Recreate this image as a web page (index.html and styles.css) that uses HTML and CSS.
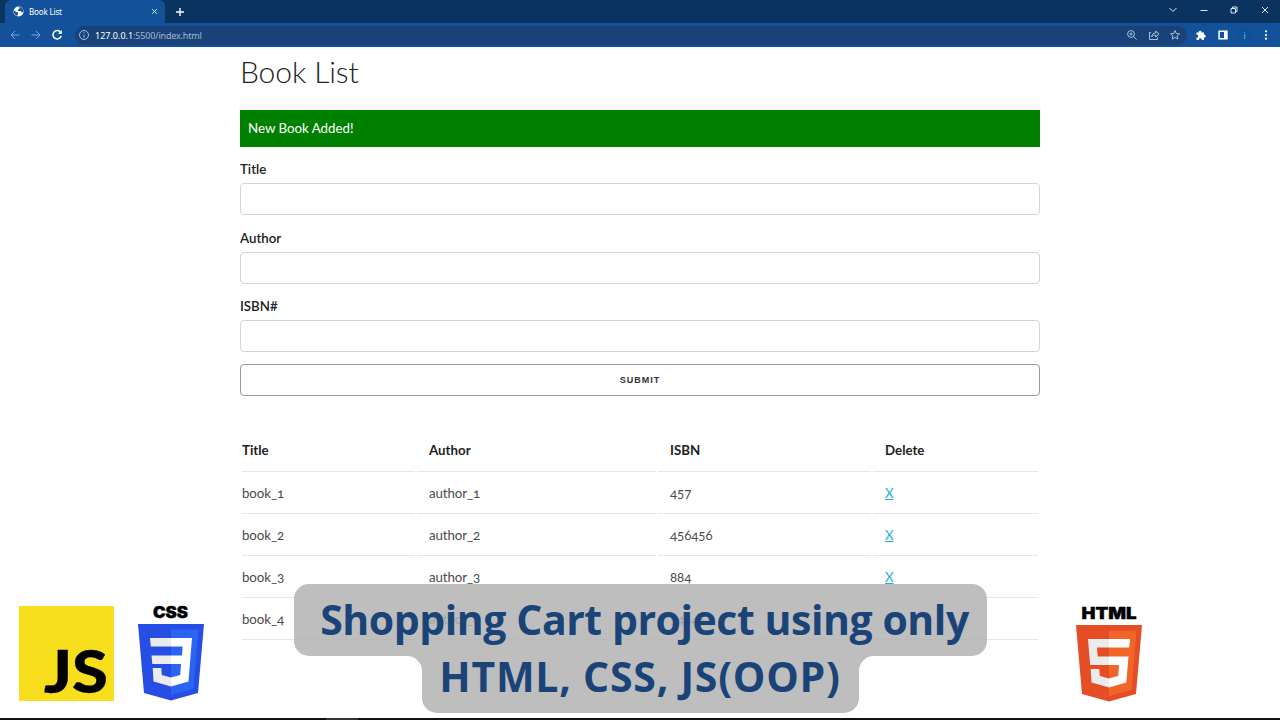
FILE: index.html
```
<!DOCTYPE html>
<html lang="en">

<head>
    <meta charset="UTF-8">
    <meta name="viewport" content="width=device-width, initial-scale=1.0">
    <title>Book List</title>
    <link rel="stylesheet" href="styles.css">
</head>

<body>
    <div class="browser">
        <div class="tab-bar">
            <div class="tab">
                <svg class="favicon" viewBox="0 0 24 24">
                    <circle cx="12" cy="12" r="11" fill="#fff" />
                    <path d="M2 9l5 4 4 1v3l-2 5-4-3-3-5zM12 2l3 3-4 3v3h6l2 3 3-1V8l-4-5z" fill="#14509a" />
                </svg>
                <span class="tab-title">Book List</span>
                <svg class="tab-close" viewBox="0 0 8 8"><path d="M1.4 1.4l5.2 5.2M6.6 1.4L1.4 6.6" /></svg>
            </div>
            <svg class="new-tab" viewBox="0 0 10 10"><path d="M5 1v8M1 5h8" /></svg>
            <div class="window-controls">
                <svg viewBox="0 0 12 12"><path d="M2.5 4L6 7.5 9.5 4" /></svg>
                <svg viewBox="0 0 12 12"><path d="M2.5 6.5h7" /></svg>
                <svg viewBox="0 0 12 12"><path d="M3 4.5h4.5V9H3zM4.5 4.5V3H9v4.5H7.5" /></svg>
                <svg viewBox="0 0 12 12"><path d="M3 3l6 6M9 3L3 9" /></svg>
            </div>
        </div>
        <div class="toolbar">
            <div class="nav">
                <svg class="dim" viewBox="0 0 12 12"><path d="M10.5 6H2M6 2L2 6l4 4" /></svg>
                <svg class="dim" viewBox="0 0 12 12"><path d="M1.5 6H10M6 2l4 4-4 4" /></svg>
                <svg class="reload" viewBox="0 0 12 12"><path d="M9.6 3.3A4.2 4.2 0 1 0 10.2 7" /><path d="M10.8 1v4H6.8z" class="solid" /></svg>
            </div>
            <div class="address">
                <svg class="info" viewBox="0 0 12 12"><circle cx="6" cy="6" r="4.5" /><path d="M6 5.5v3M6 3.3v1" /></svg>
                <span class="host">127.0.0.1</span><span class="path">:5500/index.html</span>
                <div class="address-icons">
                    <svg viewBox="0 0 12 12"><circle cx="5" cy="5" r="3.4" /><path d="M7.6 7.6l3 3M3.5 5h3M5 3.5v3" /></svg>
                    <svg viewBox="0 0 12 12"><path d="M3 3.5H1.5v7h8V8.500M3.500 8c.5-3 2-4 4.300-4V2l3.200 3-3.200 3V6.200C6 6.200 4.600 6.500 3.500 8z" /></svg>
                    <svg viewBox="0 0 12 12"><path d="M6 1.500l1.300 3 3.200.3-2.400 2.100.7 3.200L6 8.400l-2.800 1.700.7-3.200-2.400-2.100 3.200-.3z" /></svg>
                </div>
            </div>
            <div class="actions">
                <svg viewBox="0 0 12 12"><path class="solid" d="M1.500 3.500h2.300a1.400 1.400 0 1 1 2.700 0H9v2.300a1.400 1.400 0 1 1 0 2.700V11H6.700a1.400 1.400 0 1 0-2.700 0H1.500V8.500a1.400 1.400 0 1 0 0-2.700z" /></svg>
                <svg viewBox="0 0 12 12"><path class="solid" fill-rule="evenodd" d="M1.300 1.500h9.400v9H1.300zM2.800 3v6h4.200V3z" /></svg>
                <span class="avatar">i</span>
                <svg viewBox="0 0 12 12"><circle class="solid" cx="5" cy="2.300" r="1.100" /><circle class="solid" cx="5" cy="6" r="1.100" /><circle class="solid" cx="5" cy="9.700" r="1.100" /></svg>
            </div>
        </div>
    </div>

    <div class="container">
        <h1>Book List</h1>
        <div class="alert success">New Book Added!</div>

        <form id="book-form">
            <div class="form-group">
                <label for="title">Title</label>
                <input type="text" id="title" class="form-control">
            </div>
            <div class="form-group">
                <label for="author">Author</label>
                <input type="text" id="author" class="form-control">
            </div>
            <div class="form-group">
                <label for="isbn">ISBN#</label>
                <input type="text" id="isbn" class="form-control">
            </div>
            <button type="button" class="btn">Submit</button>
        </form>

        <table class="book-table">
            <colgroup>
                <col class="col-title">
                <col class="col-author">
                <col class="col-isbn">
                <col class="col-delete">
            </colgroup>
            <thead>
                <tr><th>Title</th><th>Author</th><th>ISBN</th><th>Delete</th></tr>
            </thead>
            <tbody id="book-list">
                <tr><td>book_1</td><td>author_1</td><td>457</td><td><a href="#">X</a></td></tr>
                <tr><td>book_2</td><td>author_2</td><td>456456</td><td><a href="#">X</a></td></tr>
                <tr><td>book_3</td><td>author_3</td><td>884</td><td><a href="#">X</a></td></tr>
                <tr><td>book_4</td><td>author_4</td><td>545454</td><td><a href="#">X</a></td></tr>
            </tbody>
        </table>
    </div>

    <!-- caption and logos lie over the page -->
    <div class="caption">
        <svg class="caption-bg" viewBox="0 0 693 130">
            <path d="M15 0H678A15 15 0 0 1 693 15V57A15 15 0 0 1 678 72H580A15 15 0 0 0 565 87V114A15 15 0 0 1 550 129H143A15 15 0 0 1 128 114V87A15 15 0 0 0 113 72H15A15 15 0 0 1 0 57V15A15 15 0 0 1 15 0Z" />
        </svg>
        <p class="line-one">Shopping Cart project using only</p>
        <p class="line-two">HTML, CSS, JS(OOP)</p>
    </div>

    <svg class="logo js-logo" viewBox="0 0 95 95">
        <rect width="95" height="95" fill="#f7df1e" />
        <text x="25" y="87" textLength="64" lengthAdjust="spacingAndGlyphs">JS</text>
    </svg>

    <svg class="logo css-logo" viewBox="0 0 68 96">
        <text x="16" y="13" textLength="35" lengthAdjust="spacingAndGlyphs">CSS</text>
        <path d="M1 19H67L61 88 34 95.500 7 88Z" fill="#264de4" />
        <path d="M34 24.500H61.500L56.500 84 34 90Z" fill="#2965f1" />
        <path d="M13 33H34V41.500H13.800ZM14.500 50.500H34V59H15.300ZM15.700 63H24.300L24.800 70 34 72.500V81.500L16.500 76.500Z" fill="#ebebeb" />
        <path d="M34 33H55L51.500 76.500 34 81.500V72.500L43.200 70 44 59H34V50.500H45L45.600 41.500H34Z" fill="#fff" />
    </svg>

    <svg class="logo html-logo" viewBox="0 0 68 96">
        <text x="6.500" y="12.800" textLength="55" lengthAdjust="spacingAndGlyphs">HTML</text>
        <path d="M1 19H67L61 88 34 95.500 7 88Z" fill="#e44d26" />
        <path d="M34 24.500H61.500L56.500 84 34 90Z" fill="#f16529" />
        <path d="M13 33H34V41.500H22L22.800 50.500H34V59H15.200ZM15.700 63H24.300L24.800 70 34 72.500V81.500L16.500 76.500Z" fill="#ebebeb" />
        <path d="M34 33H55L54.300 41.500H34ZM34 50.500H53.500L51.300 76.500 34 81.500V72.500L43.200 70 44 59H34Z" fill="#fff" />
    </svg>

    <div class="bottom-edge"></div>
</body>

</html>
```
FILE: styles.css
```
* {
    box-sizing: border-box;
}

body {
    margin: 0;
    height: 720px;
    position: relative;
    overflow: hidden;
    background-color: #fff;
    color: #222;
    font-family: Lato, sans-serif;
    font-size: 13.3px;
}

svg {
    display: block;
    flex: none;
}

/* browser window */
.browser {
    height: 47px;
    background-color: #14519b;
    font-family: "Noto Sans", sans-serif;
    color: #fff;
}

.browser svg {
    width: 12px;
    height: 12px;
    fill: none;
    stroke: #dce7f5;
    stroke-width: 1;
}

.browser .solid {
    fill: #fff;
    stroke: none;
}

.tab-bar {
    display: flex;
    align-items: center;
    height: 23px;
    background-color: #0b335f;
}

.tab {
    display: flex;
    align-items: center;
    width: 160px;
    height: 23px;
    margin-left: 5px;
    padding: 0 7px 0 8px;
    border-radius: 6px 6px 0 0;
    background-color: #14519b;
}

.browser .favicon {
    width: 11px;
    height: 11px;
    stroke: none;
}

.tab-title {
    flex: 1;
    margin-left: 5px;
    font-size: 8px;
    letter-spacing: -0.15px;
}

.browser .tab-close {
    width: 7px;
    height: 7px;
    stroke: #fff;
}

.browser .new-tab {
    width: 10px;
    height: 10px;
    margin-left: 10px;
    stroke: #fff;
    stroke-width: 1.4;
}

.window-controls {
    display: flex;
    gap: 18.6px;
    margin: -3px 9px 0 auto;
}

.toolbar {
    display: flex;
    align-items: center;
    height: 24px;
}

.nav {
    display: flex;
    gap: 9px;
    width: 75px;
    padding-left: 9px;
}

.browser .dim {
    stroke: #7fa5d3;
}

.browser .reload {
    stroke: #fff;
    stroke-width: 1.5;
}

.address {
    display: flex;
    align-items: center;
    width: 1112px;
    height: 19px;
    padding: 0 6px 0 3px;
    border-radius: 10px;
    background-color: #194378;
    font-size: 9px;
    letter-spacing: -0.18px;
}

.browser .info {
    margin-right: 5px;
    stroke: #a9bfda;
}

.host {
    letter-spacing: 0;
}

.path {
    color: #a3b8d2;
}

.address-icons {
    display: flex;
    gap: 9.5px;
    margin-left: auto;
}

.browser .address-icons svg {
    stroke: #a9bfda;
}

.actions {
    display: flex;
    align-items: center;
    gap: 9.5px;
    margin-left: 8px;
}

.avatar {
    width: 13px;
    height: 13px;
    border-radius: 50%;
    background-color: #0b5394;
    color: #7fc4ee;
    font-size: 8px;
    line-height: 13px;
    text-align: center;
}

/* book list page */
.container {
    width: 800px;
    margin: 0 auto;
}

h1 {
    margin: 0;
    padding-top: 5px;
    height: 63px;
    font-size: 30px;
    font-weight: 300;
    line-height: 39px;
    letter-spacing: -0.1px;
}

.alert {
    height: 37px;
    padding: 0 8px;
    color: #fff;
    line-height: 36px;
}

.success {
    background-color: green;
}

#book-form {
    padding-top: 11px;
}

.form-group {
    height: 68.5px;
}

label {
    display: block;
    height: 25px;
    line-height: 22px;
    font-weight: 600;
}

.form-control {
    display: block;
    width: 100%;
    height: 32px;
    border: 1px solid #d6d6d6;
    border-radius: 4px;
    background-color: #fff;
}

.btn {
    display: block;
    width: 100%;
    height: 32px;
    border: 1px solid #999;
    border-radius: 4px;
    background-color: #fff;
    color: #333;
    font-family: "Liberation Sans", Arial, sans-serif;
    font-size: 9px;
    font-weight: 700;
    letter-spacing: 1px;
    text-transform: uppercase;
}

.book-table {
    width: 800px;
    margin-top: 33.5px;
    table-layout: fixed;
    border-spacing: 2px 0;
    font-variant-numeric: oldstyle-nums;
}

.col-title { width: 173px; }
.col-author { width: 239px; }
.col-isbn { width: 213px; }
.col-delete { width: 165px; }

th,
td {
    height: 42px;
    padding: 0 12px;
    border-bottom: 1px solid #e6e6e6;
    text-align: left;
}

th {
    height: 43px;
    font-weight: 700;
}

td {
    color: #4a4a4a;
    letter-spacing: -0.1px;
}

th:first-child,
td:first-child {
    padding-left: 0;
}

a {
    color: #1eaedb;
}

/* caption over the page */
.caption {
    position: absolute;
    left: 293.5px;
    top: 583.5px;
    width: 693px;
    height: 130px;
    color: #1a4478;
    font-family: "Open Sans", sans-serif;
    font-size: 41px;
    font-weight: 700;
    text-align: center;
    white-space: nowrap;
}

.caption-bg {
    position: absolute;
    inset: 0;
    width: 693px;
    height: 130px;
    fill: #b2b2b2;
    opacity: 0.83;
}

.caption p {
    position: relative;
    margin: 0;
    height: 57px;
    line-height: 71px;
}

.caption .line-one {
    padding-left: 9px;
    letter-spacing: -0.45px;
}

.caption .line-two {
    letter-spacing: 0.75px;
}

/* technology logos */
.logo {
    position: absolute;
    overflow: visible;
}

.logo text {
    font-family: Inter, sans-serif;
    font-size: 16px;
    font-weight: 900;
    stroke: #000;
    stroke-width: 0.4;
}

.js-logo {
    left: 19px;
    top: 606px;
    width: 95px;
    height: 95px;
}

.js-logo text {
    font-family: Lato, sans-serif;
    font-size: 59px;
}

.css-logo {
    left: 137px;
    top: 605px;
    width: 68px;
    height: 96px;
}

.html-logo {
    left: 1075px;
    top: 605.5px;
    width: 68px;
    height: 96px;
}

.bottom-edge {
    position: absolute;
    left: 0;
    right: 0;
    bottom: 0;
    height: 2px;
    background: linear-gradient(90deg, #111 326px, #333 326px, #333 358px, #111 358px);
}
```
